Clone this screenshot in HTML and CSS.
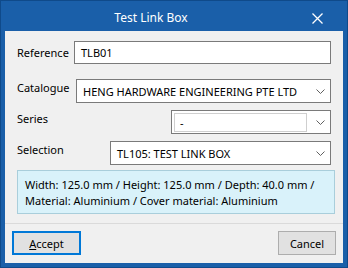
FILE: index.html
```html
<!DOCTYPE html>
<html>
<head>
<meta charset="utf-8">
<link rel="stylesheet" href="styles.css">
</head>
<body>
<div class="window">
  <div class="titlebar">
    <span class="title">Test Link Box</span>
    <span class="close">
      <svg width="11" height="11" viewBox="0 0 11 11"><path d="M0.5 0.5 L10.5 10.5 M10.5 0.5 L0.5 10.5" stroke="#fff" stroke-width="1.3" fill="none"/></svg>
    </span>
  </div>
  <div class="content">
    <div class="form">
      <div class="row row-ref">
        <span class="label">Reference</span>
        <div class="input ref-input">TLB01</div>
      </div>
      <div class="row row-cat">
        <span class="label">Catalogue</span>
        <div class="combo cat-combo">
          <span class="combo-text">HENG HARDWARE ENGINEERING PTE LTD</span>
          <svg class="chev" width="9" height="5" viewBox="0 0 9 5"><path d="M0.5 0.5 L4.5 4.5 L8.5 0.5" stroke="#606060" fill="none"/></svg>
        </div>
      </div>
      <div class="row row-ser">
        <span class="label">Series</span>
        <div class="combo ser-combo">
          <div class="ser-edit">-</div>
          <svg class="chev" width="9" height="5" viewBox="0 0 9 5"><path d="M0.5 0.5 L4.5 4.5 L8.5 0.5" stroke="#606060" fill="none"/></svg>
        </div>
      </div>
      <div class="row row-sel">
        <span class="label">Selection</span>
        <div class="combo sel-combo">
          <span class="combo-text">TL105: TEST LINK BOX</span>
          <svg class="chev" width="9" height="5" viewBox="0 0 9 5"><path d="M0.5 0.5 L4.5 4.5 L8.5 0.5" stroke="#606060" fill="none"/></svg>
        </div>
      </div>
      <div class="info">Width: 125.0 mm / Height: 125.0 mm / Depth: 40.0 mm /<br>Material: Aluminium / Cover material: Aluminium</div>
    </div>
    <div class="footer">
      <button class="btn btn-accept"><u>A</u>ccept</button>
      <button class="btn btn-cancel">Cancel</button>
    </div>
  </div>
</div>
</body>
</html>
```
FILE: styles.css
```css
* { box-sizing: border-box; }
html, body { margin: 0; padding: 0; }
body {
  width: 348px;
  height: 268px;
  font-family: "Noto Sans", "Open Sans", sans-serif;
  font-size: 11px;
  color: #000;
  white-space: nowrap;
}
.window {
  width: 348px;
  height: 268px;
  background: #1a5fa9;
  border: 1px solid #0f4a8a;
  display: flex;
  flex-direction: column;
  padding: 0 4px 4px 4px;
}
.titlebar {
  height: 30px;
  flex: none;
  display: flex;
  align-items: center;
  position: relative;
  color: #fff;
  font-size: 12px;
}
.title {
  width: 292px;
  text-align: center;
  padding-top: 2px;
}
.close {
  position: absolute;
  left: 307px;
  top: 12px;
  display: flex;
}
.content {
  flex: 1;
  background: #f0f0f0;
  display: flex;
  flex-direction: column;
}
.form {
  padding: 10px 12px 0 12px;
  display: flex;
  flex-direction: column;
}
.row {
  display: flex;
  align-items: flex-start;
}
.label {
  line-height: 16px;
}
.input, .combo {
  background: #fff;
  border: 1px solid #7a7a7a;
  display: flex;
  align-items: center;
}
.row-ref { height: 23px; align-items: center; }
.ref-input {
  margin-left: auto;
  width: 257px;
  height: 23px;
  padding-left: 6px;
}
.row-cat { margin-top: 15px; }
.row-cat .label { padding-top: 1px; }
.cat-combo {
  margin-left: auto;
  width: 255px;
  height: 24px;
  padding-left: 6px;
}
.combo-text { flex: 1; padding-top: 1px; }
.chev { margin-right: 5px; flex: none; }
.row-ser { margin-top: 7px; }
.row-ser .label { padding-top: 1px; }
.ser-combo {
  margin-left: auto;
  width: 160px;
  height: 24px;
  padding-left: 2px;
}
.ser-edit {
  width: 139px;
  height: 19px;
  border: 1px solid #cfcfcf;
  margin-right: 9px;
  padding-left: 5px;
  line-height: 17px;
}
.row-sel { margin-top: 7px; }
.row-sel .label { padding-top: 1px; }
.sel-combo {
  margin-left: auto;
  width: 221px;
  height: 24px;
  padding-left: 6px;
}
.info {
  margin-top: 5px;
  margin-left: 0;
  margin-right: -4px;
  height: 44px;
  background: #d9f2fa;
  border: 1px solid #a9cedb;
  padding: 6px 7px;
  line-height: 16px;
}
.footer {
  margin-top: 9px;
  border-top: 1px solid #dadada;
  padding: 7px 7px 0 7px;
  display: flex;
  justify-content: space-between;
}
.btn {
  font-family: inherit;
  font-size: 11px;
  color: #000;
  background: #e1e1e1;
  height: 24px;
  padding: 0;
  margin: 0;
}
.btn-accept {
  width: 69px;
  border: 2px solid #0078d7;
}
.btn-cancel {
  width: 58px;
  border: 1px solid #adadad;
}
```
